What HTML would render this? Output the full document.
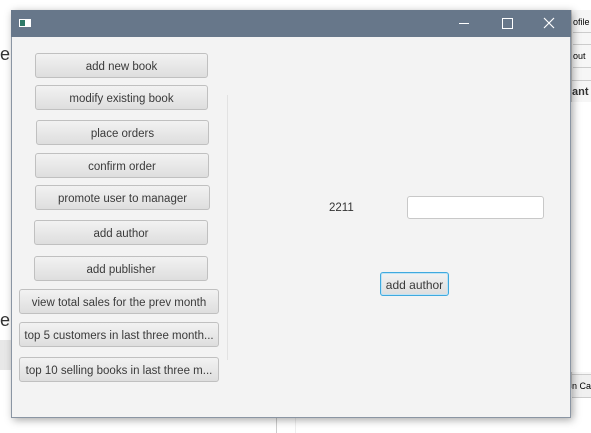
<!DOCTYPE html>
<html><head><style>
body{margin:0;width:591px;height:433px;background:#fff;position:relative;overflow:hidden;font-family:"Liberation Sans",sans-serif;}
.a{position:absolute;}
.win{left:11px;top:10px;width:560px;height:408px;background:#f3f3f3;border:1px solid #8a95a3;box-sizing:border-box;box-shadow:2px 2px 8px rgba(0,0,0,.35);}
.tb{left:11px;top:10px;width:560px;height:27px;background:#67778a;}
.b{position:absolute;box-sizing:border-box;border:1px solid #c0c0c0;border-radius:3px;background:linear-gradient(#f2f2f2,#dedede);font-size:11.5px;color:#3a3a3a;text-align:center;line-height:26px;white-space:nowrap;}
.bg{color:#333;font-size:11px;font-weight:bold;}
</style></head><body>
<div class="a" style="left:571px;top:10px;width:20px;height:378px;border-left:1px solid #ccc;background:#f6f6f6"></div>
<div class="a" style="left:573px;top:12px;width:18px;height:20px;font-size:9px;line-height:20px;overflow:hidden;border-bottom:1px solid #ccc">ofile</div>
<div class="a" style="left:573px;top:44px;width:18px;height:22px;font-size:9px;line-height:22px;overflow:hidden;border-bottom:1px solid #ccc;border-top:1px solid #ccc">out</div>
<div class="a bg" style="left:572px;top:80px;width:19px;height:22px;line-height:22px;overflow:hidden;border-top:1px solid #ccc;border-bottom:1px solid #ccc">ant</div>
<div class="a" style="left:571px;top:102px;width:20px;height:270px;background:#fff"></div>
<div class="a" style="left:572px;top:374px;width:19px;height:22px;font-size:9px;line-height:22px;overflow:hidden;border-top:1px solid #ccc;border-bottom:1px solid #ccc;background:#f0f0f0">n Ca</div>
<div class="a" style="left:0;top:44px;font-size:18px;color:#333">e</div>
<div class="a" style="left:0;top:310px;font-size:18px;color:#333">e</div>
<div class="a" style="left:0;top:340px;width:11px;height:30px;background:#e8e8e8"></div>
<div class="a" style="left:0;top:418px;width:591px;height:15px;background:#fff"></div>
<div class="a" style="left:276px;top:418px;width:1px;height:15px;background:#ccc"></div>
<div class="a" style="left:295px;top:418px;width:1px;height:15px;background:#eee"></div>

<div class="a win"></div>
<div class="a tb"></div>
<div class="a" style="left:19px;top:19px;width:12px;height:8px;background:#fff"><div style="margin:1px;width:5px;height:6px;background:#2f7a68"></div></div>
<div class="a" style="left:459px;top:23px;width:10px;height:1px;background:#fff"></div>
<div class="a" style="left:502px;top:18px;width:9px;height:9px;border:1px solid #fff"></div>
<svg class="a" style="left:543px;top:17px" width="12" height="12"><path d="M1 1L11 11M11 1L1 11" stroke="#fff" stroke-width="1.2"/></svg>

<div class="a" style="left:227px;top:95px;width:1px;height:265px;background:#e2e2e2"></div>

<div class="b" style="left:35px;top:53px;width:173px;height:25px">add new book</div>
<div class="b" style="left:35px;top:85px;width:173px;height:25px">modify existing book</div>
<div class="b" style="left:36px;top:120px;width:173px;height:25px">place orders</div>
<div class="b" style="left:35px;top:153px;width:174px;height:25px">confirm order</div>
<div class="b" style="left:35px;top:185px;width:175px;height:25px">promote user to manager</div>
<div class="b" style="left:34px;top:220px;width:174px;height:25px">add author</div>
<div class="b" style="left:34px;top:256px;width:174px;height:25px">add publisher</div>
<div class="b" style="left:19px;top:289px;width:200px;height:25px">view total sales for the prev month</div>
<div class="b" style="left:19px;top:322px;width:200px;height:25px">top 5 customers in last three month...</div>
<div class="b" style="left:19px;top:357px;width:200px;height:25px">top 10 selling books in last three m...</div>

<div class="a" style="left:329px;top:202px;font-size:11.5px;color:#333">2211</div>
<div class="a" style="left:407px;top:196px;width:137px;height:23px;box-sizing:border-box;background:#fff;border:1px solid #c8c8c8;border-radius:3px"></div>
<div class="b" style="left:380px;top:272px;width:69px;height:24px;border:1px solid #3fa9de;box-shadow:inset 0 0 0 1px #bfe3f5;line-height:24px;font-size:12px">add author</div>
</body></html>
